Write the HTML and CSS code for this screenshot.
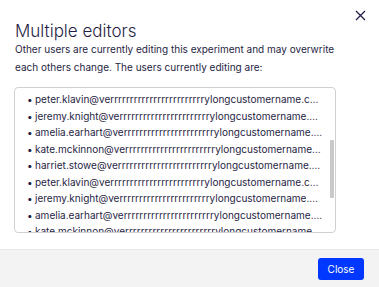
FILE: index.html
```html
<!DOCTYPE html>
<html lang="en">
<head>
  <meta charset="UTF-8" />
  <title>Multiple editors</title>
  <link rel="stylesheet" href="styles.css">
</head>
<body>
  <div class="dialog">
    <div class="dialog-body">
      <button class="close-x" aria-label="Close">
        <svg width="11" height="11" viewBox="0 0 11 11"><path d="M1 1L10 10M10 1L1 10" stroke="#1f1e45" stroke-width="1.3" fill="none"/></svg>
      </button>
      <h2 class="title">Multiple editors</h2>
      <p class="intro">Other users are currently editing this experiment and may overwrite each others change. The users currently editing are:</p>
      <div class="editors-box">
        <ul class="editors">
          <li>peter.klavin@verrrrrrrrrrrrrrrrrrrrrrrrylongcustomername.com</li>
          <li>jeremy.knight@verrrrrrrrrrrrrrrrrrrrrrrylongcustomername.com</li>
          <li>amelia.earhart@verrrrrrrrrrrrrrrrrrrrrrrylongcustomername.com</li>
          <li>kate.mckinnon@verrrrrrrrrrrrrrrrrrrrrrrylongcustomername.com</li>
          <li>harriet.stowe@verrrrrrrrrrrrrrrrrrrrrrrrylongcustomername.com</li>
          <li>peter.klavin@verrrrrrrrrrrrrrrrrrrrrrrrylongcustomername.com</li>
          <li>jeremy.knight@verrrrrrrrrrrrrrrrrrrrrrrylongcustomername.com</li>
          <li>amelia.earhart@verrrrrrrrrrrrrrrrrrrrrrrylongcustomername.com</li>
          <li>kate.mckinnon@verrrrrrrrrrrrrrrrrrrrrrrylongcustomername.com</li>
          <li>harriet.stowe@verrrrrrrrrrrrrrrrrrrrrrrrylongcustomername.com</li>
        </ul>
        <div class="scroll-thumb"></div>
      </div>
    </div>
    <div class="dialog-footer">
      <button class="close-btn">Close</button>
    </div>
  </div>
</body>
</html>
```

FILE: styles.css
```css
/* === GLOBAL === */
* {
  box-sizing: border-box;
  margin: 0;
  padding: 0;
}

body {
  font-family: 'Inter', 'Liberation Sans', sans-serif;
  color: #1f1e45;
  background: #fff;
  width: 379px;
  height: 287px;
  overflow: hidden;
}

/* === DIALOG === */
.dialog {
  display: flex;
  flex-direction: column;
  height: 287px;
}

.dialog-body {
  position: relative;
  flex: 1;
  padding: 21px 43px 0 14px;
}

.close-x {
  position: absolute;
  top: 9px;
  right: 13px;
  background: none;
  border: none;
  width: 11px;
  height: 11px;
}

.title {
  font-size: 17px;
  font-weight: 300;
  line-height: 20px;
  padding-left: 1px;
}

.intro {
  margin-top: -1px;
  font-size: 10px;
  line-height: 18px;
  padding-left: 1px;
}

/* === EDITORS LIST === */
.editors-box {
  position: relative;
  margin-top: 11px;
  height: 146px;
  border: 1px solid #cfcfd4;
  border-radius: 4px;
  padding-top: 3px;
  overflow: hidden;
}

.editors {
  list-style: none;
  padding: 0 12px 0 12px;
  font-size: 10px;
  line-height: 16.5px;
}

.editors li {
  white-space: nowrap;
  overflow: hidden;
  text-overflow: ellipsis;
}

.editors li::before {
  content: "•";
  display: inline-block;
  width: 8px;
}

.scroll-thumb {
  position: absolute;
  top: 52px;
  right: 1px;
  width: 4px;
  height: 58px;
  background: #c9c9c9;
  border-radius: 1px;
}

/* === FOOTER === */
.dialog-footer {
  display: flex;
  justify-content: flex-end;
  align-items: center;
  height: 38px;
  background: #f3f3f3;
  border-top: 1px solid #e8e8e8;
  padding: 0 15px;
}

.close-btn {
  background: #0038ff;
  color: #fff;
  border: none;
  border-radius: 3px;
  font-family: inherit;
  font-size: 10px;
  width: 46px;
  height: 22px;
}
```
